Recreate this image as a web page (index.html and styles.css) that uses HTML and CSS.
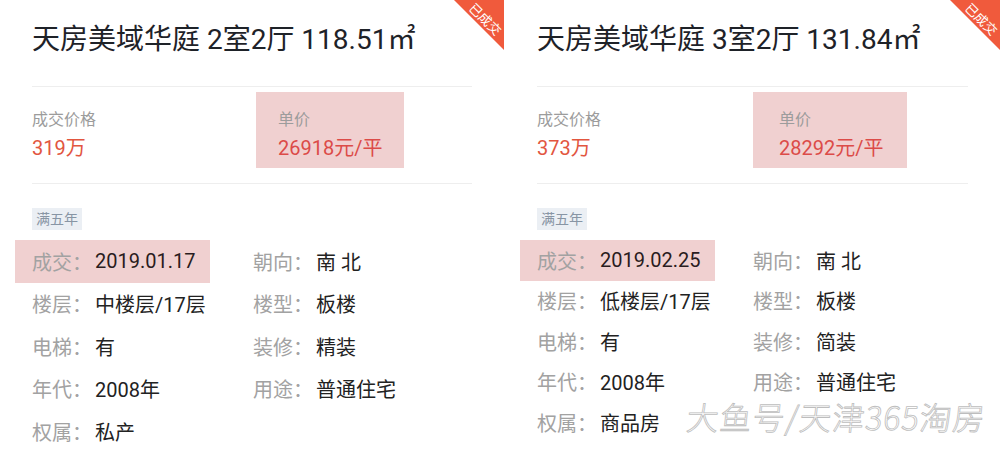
FILE: index.html
```html
<!DOCTYPE html>
<html lang="zh-CN">
<head>
    <meta charset="UTF-8">
    <title>天房美域华庭 成交记录</title>
    <link rel="stylesheet" href="styles.css">
</head>
<body>
    <div class="page">
        <!-- 左侧成交卡片 -->
        <section class="card card-left">
            <div class="ribbon"><span>已成交</span></div>
            <h1 class="card-title">天房美域华庭 2室2厅 118.51㎡</h1>
            <div class="price-row">
                <div class="price-item">
                    <div class="price-label">成交价格</div>
                    <div class="price-value">319万</div>
                </div>
                <div class="price-item marked">
                    <div class="price-label">单价</div>
                    <div class="price-value">26918元/平</div>
                </div>
            </div>
            <div class="tags"><span class="tag">满五年</span></div>
            <ul class="details">
                <li class="detail marked"><span class="detail-label">成交：</span><span class="detail-value">2019.01.17</span></li>
                <li class="detail"><span class="detail-label">朝向：</span><span class="detail-value">南 北</span></li>
                <li class="detail"><span class="detail-label">楼层：</span><span class="detail-value">中楼层/17层</span></li>
                <li class="detail"><span class="detail-label">楼型：</span><span class="detail-value">板楼</span></li>
                <li class="detail"><span class="detail-label">电梯：</span><span class="detail-value">有</span></li>
                <li class="detail"><span class="detail-label">装修：</span><span class="detail-value">精装</span></li>
                <li class="detail"><span class="detail-label">年代：</span><span class="detail-value">2008年</span></li>
                <li class="detail"><span class="detail-label">用途：</span><span class="detail-value">普通住宅</span></li>
                <li class="detail"><span class="detail-label">权属：</span><span class="detail-value">私产</span></li>
            </ul>
        </section>

        <!-- 右侧成交卡片 -->
        <section class="card card-right">
            <div class="ribbon"><span>已成交</span></div>
            <h1 class="card-title">天房美域华庭 3室2厅 131.84㎡</h1>
            <div class="price-row">
                <div class="price-item">
                    <div class="price-label">成交价格</div>
                    <div class="price-value">373万</div>
                </div>
                <div class="price-item marked">
                    <div class="price-label">单价</div>
                    <div class="price-value">28292元/平</div>
                </div>
            </div>
            <div class="tags"><span class="tag">满五年</span></div>
            <ul class="details">
                <li class="detail marked"><span class="detail-label">成交：</span><span class="detail-value">2019.02.25</span></li>
                <li class="detail"><span class="detail-label">朝向：</span><span class="detail-value">南 北</span></li>
                <li class="detail"><span class="detail-label">楼层：</span><span class="detail-value">低楼层/17层</span></li>
                <li class="detail"><span class="detail-label">楼型：</span><span class="detail-value">板楼</span></li>
                <li class="detail"><span class="detail-label">电梯：</span><span class="detail-value">有</span></li>
                <li class="detail"><span class="detail-label">装修：</span><span class="detail-value">简装</span></li>
                <li class="detail"><span class="detail-label">年代：</span><span class="detail-value">2008年</span></li>
                <li class="detail"><span class="detail-label">用途：</span><span class="detail-value">普通住宅</span></li>
                <li class="detail"><span class="detail-label">权属：</span><span class="detail-value">商品房</span></li>
            </ul>
            <div class="watermark">大鱼号/天津365淘房</div>
        </section>
    </div>
</body>
</html>
```

FILE: styles.css
```css
/* 成交卡片 */
body {
    margin: 0;
    padding: 0;
    background-color: #fff;
    font-family: Roboto, "Noto Sans CJK SC", sans-serif;
    color: #222;
}
.page {
    display: flex;
    height: 454px;
    overflow: hidden;
}
.card {
    position: relative;
    overflow: hidden;
    box-sizing: border-box;
    padding: 23px 32px 0 32px;
    background-color: #fff;
}
.card-left {
    width: 504px;
}
.card-right {
    flex: 1;
    margin-left: 1px;
    padding-left: 32px;
}
.ribbon {
    position: absolute;
    top: 0;
    right: 0;
    width: 50px;
    height: 50px;
    background-color: #f05a3c;
    clip-path: polygon(0 0, 100% 0, 100% 100%);
}
.ribbon span {
    position: absolute;
    left: 0;
    top: 12px;
    width: 62px;
    line-height: 15px;
    font-size: 13px;
    color: #fff;
    text-align: center;
    transform: rotate(45deg);
}
.card-title {
    margin: 0 0 29px 0;
    font-size: 28px;
    font-weight: 400;
    line-height: 34px;
    color: #1e2228;
    white-space: nowrap;
}
.price-row {
    display: flex;
    align-items: flex-start;
    border-top: 1px solid #eeeeee;
    border-bottom: 1px solid #eeeeee;
    padding: 5px 0 15px 0;
}
.price-item {
    padding: 17px 22px 7px 22px;
}
.price-item:first-child {
    width: 224px;
    box-sizing: border-box;
    padding-left: 0;
}
.card-right .price-item:first-child {
    width: 216px;
}
.card-right .price-item.marked {
    padding-left: 26px;
    padding-right: 24px;
}
.price-item.marked {
    background-color: #f0d0d0;
}
.price-label {
    font-size: 16px;
    line-height: 22px;
    color: #9c9c9c;
}
.price-value {
    margin-top: 4px;
    font-size: 20px;
    line-height: 26px;
    color: #e2563f;
}
.marked .price-value {
    color: #dc4b48;
}
.tags {
    margin-top: 24px;
}
.tag {
    display: inline-block;
    padding: 0 4px;
    font-size: 14px;
    line-height: 22px;
    color: #8895a4;
    background-color: #ebeff4;
}
.details {
    list-style: none;
    margin: 10px 0 0 0;
    padding: 0;
    display: grid;
    grid-template-columns: 221px 1fr;
    grid-auto-rows: 42.5px;
}
.card-right .details {
    grid-template-columns: 216px 1fr;
    grid-auto-rows: 40.5px;
}
.detail {
    display: flex;
    align-items: center;
    font-size: 20px;
    white-space: nowrap;
}
.detail.marked {
    justify-self: start;
    margin-left: -17px;
    padding: 0 15px 0 17px;
    background-color: #f0d0d0;
}
.detail-label {
    width: 63px;
    flex: none;
    color: #a2a2a2;
}
.detail-value {
    color: #222;
}
.marked .detail-value {
    color: #2a1c20;
}
.watermark {
    position: absolute;
    left: 182px;
    top: 396px;
    font-family: "Noto Sans CJK SC", sans-serif;
    font-size: 32px;
    font-weight: 300;
    line-height: 40px;
    letter-spacing: 1px;
    color: #fff;
    -webkit-text-stroke: 0.8px #bdbdbd;
    transform: skewX(-6deg);
    white-space: nowrap;
}
```
